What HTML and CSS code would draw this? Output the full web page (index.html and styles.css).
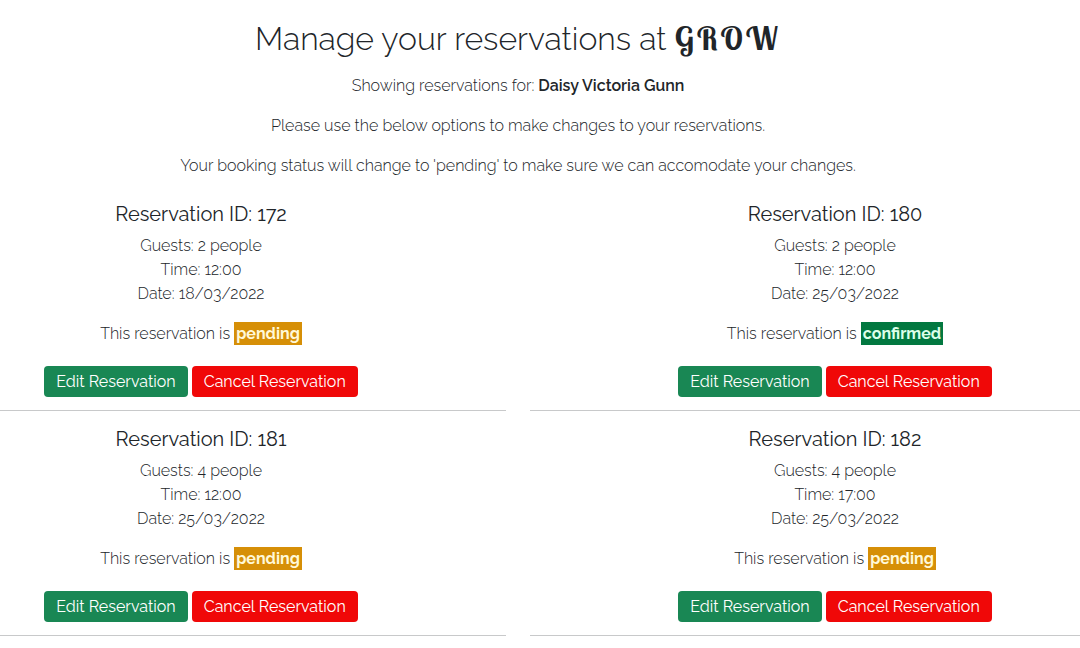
FILE: index.html
```html
<!DOCTYPE html>
<html lang="en">
<head>
<meta charset="utf-8">
<meta name="viewport" content="width=device-width, initial-scale=1">
<title>Manage your reservations</title>
<link rel="stylesheet" href="styles.css">
</head>
<body>
<main class="page">
  <header class="intro">
    <h1 class="title">Manage your reservations at <span class="brand">GROW</span></h1>
    <p>Showing reservations for: <strong>Daisy Victoria Gunn</strong></p>
    <p>Please use the below options to make changes to your reservations.</p>
    <p>Your booking status will change to 'pending' to make sure we can accomodate your changes.</p>
  </header>
  <section class="reservations">
    <article class="card">
      <div class="card-body">
        <h2 class="card-title">Reservation ID: 172</h2>
        <p>Guests: 2 people<br>Time: 12:00<br>Date: 18/03/2022</p>
        <p>This reservation is <span class="status pending">pending</span></p>
        <div class="actions"><button class="btn edit" type="button">Edit Reservation</button><button class="btn cancel" type="button">Cancel Reservation</button></div>
      </div>
    </article>
    <article class="card">
      <div class="card-body">
        <h2 class="card-title">Reservation ID: 180</h2>
        <p>Guests: 2 people<br>Time: 12:00<br>Date: 25/03/2022</p>
        <p>This reservation is <span class="status confirmed">confirmed</span></p>
        <div class="actions"><button class="btn edit" type="button">Edit Reservation</button><button class="btn cancel" type="button">Cancel Reservation</button></div>
      </div>
    </article>
    <article class="card">
      <div class="card-body">
        <h2 class="card-title">Reservation ID: 181</h2>
        <p>Guests: 4 people<br>Time: 12:00<br>Date: 25/03/2022</p>
        <p>This reservation is <span class="status pending">pending</span></p>
        <div class="actions"><button class="btn edit" type="button">Edit Reservation</button><button class="btn cancel" type="button">Cancel Reservation</button></div>
      </div>
    </article>
    <article class="card">
      <div class="card-body">
        <h2 class="card-title">Reservation ID: 182</h2>
        <p>Guests: 4 people<br>Time: 17:00<br>Date: 25/03/2022</p>
        <p>This reservation is <span class="status pending">pending</span></p>
        <div class="actions"><button class="btn edit" type="button">Edit Reservation</button><button class="btn cancel" type="button">Cancel Reservation</button></div>
      </div>
    </article>
  </section>
</main>
</body>
</html>
```
FILE: styles.css
```css
* { box-sizing: border-box; }

body {
  margin: 0;
  background: #fff;
  color: #212529;
  font-family: Raleway, Lato, sans-serif;
  font-size: 16px;
  font-weight: 300;
  line-height: 24px;
  font-variant-numeric: oldstyle-nums;
  text-align: center;
  overflow-x: hidden;
}

p { margin: 0 0 16px; }

strong { font-weight: 600; }

.page {
  margin: 0 -60px 0 -104px;
  padding-top: 20px;
}

.title {
  margin: 0 0 16px;
  font-size: 32px;
  font-weight: 300;
  line-height: 38px;
}

.brand {
  font-family: "Lobster Two", "Liberation Serif", serif;
  font-weight: 700;
  line-height: 1;
  letter-spacing: 3px;
}

.reservations {
  display: grid;
  grid-template-columns: 1fr 1fr;
  column-gap: 24px;
  padding-top: 8px;
}

.card {
  margin-bottom: 16px;
  border-bottom: 1px solid #c8c9ca;
}

.card-title {
  margin: 0 0 8px;
  font-size: 20px;
  font-weight: 400;
  line-height: 24px;
}

.status {
  padding: 2px;
  font-weight: 700;
}

.pending { background: #d68f07; color: #fff8d8; }

.confirmed { background: #027840; color: #dcffe9; }

.actions {
  display: flex;
  justify-content: center;
  gap: 4px;
  padding: 4px 0 13px;
}

.btn {
  padding: 3px 12px;
  border: 0;
  border-radius: 4px;
  color: #fff;
  font-family: inherit;
  font-size: 16px;
  font-weight: 400;
  line-height: 25px;
}

.edit { background: #198754; }

.cancel { background: #f00808; }
```
